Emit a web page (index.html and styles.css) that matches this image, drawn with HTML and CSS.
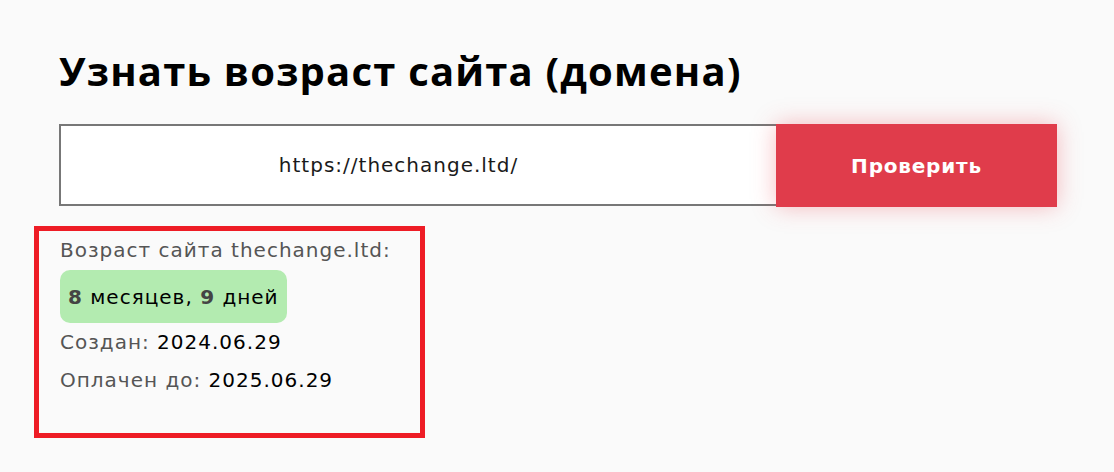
FILE: index.html
```html
<!DOCTYPE html>
<html lang="ru">
<head>
<meta charset="utf-8">
<title>Узнать возраст сайта (домена)</title>
<link rel="stylesheet" href="styles.css">
</head>
<body>
<main class="page">
  <h1 class="title">Узнать возраст сайта (домена)</h1>
  <form class="check-form">
    <input class="url-input" type="text" value="https://thechange.ltd/">
    <button class="check-btn" type="button">Проверить</button>
  </form>
  <section class="result">
    <div class="line label">Возраст сайта thechange.ltd:</div>
    <div class="age"><b class="num">8</b>&nbsp;месяцев,&nbsp;<b class="num">9</b>&nbsp;дней</div>
    <div class="line label">Создан: <span class="value">2024.06.29</span></div>
    <div class="line label">Оплачен до: <span class="value">2025.06.29</span></div>
  </section>
</main>
</body>
</html>
```
FILE: styles.css
```css
html, body {
  margin: 0;
  background: #fafafa;
}
body {
  font-family: "DejaVu Sans", "Open Sans", sans-serif;
  color: #000;
}
.page {
  padding: 44px 0 0 59px;
}
.title {
  margin: 0;
  font-family: "Open Sans", "DejaVu Sans", sans-serif;
  font-size: 40px;
  line-height: 54px;
  font-weight: 700;
  letter-spacing: 1.2px;
  color: #000;
}
.check-form {
  display: flex;
  align-items: flex-start;
  margin: 26px 0 0;
}
.url-input {
  box-sizing: border-box;
  width: 717px;
  height: 82px;
  margin: 0;
  border: 2px solid #777;
  border-right: none;
  background: #fff;
  padding: 0 40px 0 0;
  text-align: center;
  font-family: inherit;
  font-size: 20px;
  letter-spacing: 1px;
  color: #1a1a1a;
  outline: none;
}
.check-btn {
  box-sizing: border-box;
  width: 281px;
  height: 83px;
  margin: 0;
  border: none;
  background: #e03c4b;
  color: #fff;
  font-family: inherit;
  font-size: 20px;
  font-weight: 700;
  letter-spacing: 0.8px;
  box-shadow: 0 0 22px rgba(235, 70, 80, 0.35);
  cursor: pointer;
}
.result {
  box-sizing: border-box;
  width: 391px;
  margin: 19px 0 0 -25px;
  border: 5px solid #ee1c25;
  padding: 0 0 34px 21px;
  font-size: 20px;
  letter-spacing: 1px;
}
.line {
  line-height: 38px;
}
.label {
  color: #555;
}
.value {
  color: #000;
}
.age {
  display: inline-flex;
  align-items: center;
  height: 53px;
  margin-top: 1px;
  padding: 0 8px;
  background: #b3ebb0;
  border-radius: 10px;
  color: #000;
}
.num {
  font-weight: 700;
  color: #444;
}
```
